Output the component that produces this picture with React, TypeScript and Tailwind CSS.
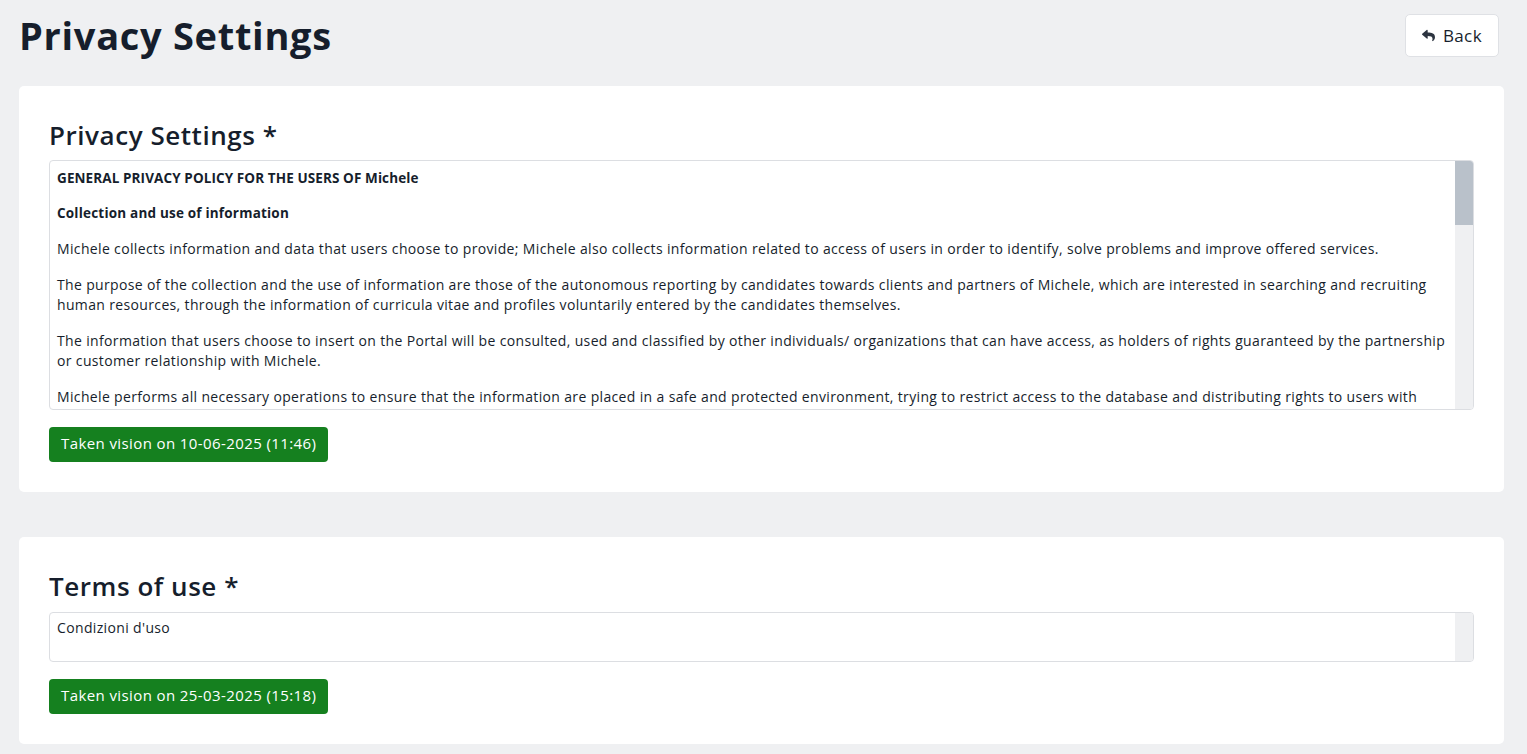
import { FaReply } from 'react-icons/fa'

const PARAGRAPHS = [
  'Michele collects information and data that users choose to provide; Michele also collects information related to access of users in order to identify, solve problems and improve offered services.',
  'The purpose of the collection and the use of information are those of the autonomous reporting by candidates towards clients and partners of Michele, which are interested in searching and recruiting human resources, through the information of curricula vitae and profiles voluntarily entered by the candidates themselves.',
  'The information that users choose to insert on the Portal will be consulted, used and classified by other individuals/ organizations that can have access, as holders of rights guaranteed by the partnership or customer relationship with Michele.',
  'Michele performs all necessary operations to ensure that the information are placed in a safe and protected environment, trying to restrict access to the database and distributing rights to users with different levels of authorization, in order to guarantee the confidentiality of the data entered.',
]

function TextBox({ height, thumb, children }: { height: string; thumb: boolean; children: React.ReactNode }) {
  return (
    <div className={`flex overflow-hidden rounded-[4px] border border-[#dcdee2] ${height}`}>
      <div className="flex-1 overflow-hidden pl-[7px] pr-[8px] text-[14px] leading-[20px] tracking-[0.35px]">
        {children}
      </div>
      <div className="w-[18px] shrink-0 bg-[#eff0f2]">
        {thumb && <div className="h-[64px] bg-[#b9c1ca]" />}
      </div>
    </div>
  )
}

function AcceptBadge({ label }: { label: string }) {
  return (
    <div className="mt-[17px] inline-flex h-[35px] items-center rounded-[4px] bg-[#15801f] px-[12px] pb-[3px] text-[15px] leading-[20px] tracking-[0.4px] text-white">
      {label}
    </div>
  )
}

export default function App() {
  return (
    <div className="min-h-screen bg-[#eff0f2] pb-[10px] pl-[19px] pr-[23px] text-[#161e2c] [font-family:'Open_Sans',sans-serif]">
      <div className="flex items-start justify-between pt-[13px]">
        <h1 className="text-[38px] font-bold leading-[44px] tracking-[0.7px]">Privacy Settings</h1>
        <button className="mr-[5px] mt-[1px] flex h-[43px] items-center gap-[8px] rounded-[5px] border border-[#dfe1e5] bg-white px-[16px] text-[17px] tracking-[0.4px]">
          <FaReply size={13} className="text-[#2c3440]" />
          Back
        </button>
      </div>

      <section className="mt-[29px] rounded-[5px] bg-white px-[30px] pb-[30px] pt-[32px]">
        <h2 className="mb-[8px] text-[26px] font-semibold leading-[34px] tracking-[0.55px]">Privacy Settings *</h2>
        <TextBox height="h-[250px]" thumb>
          <div className="pt-[7px]">
            <p className="text-[13.5px] font-bold tracking-[0.1px]">GENERAL PRIVACY POLICY FOR THE USERS OF Michele</p>
            <p className="mt-[15px] text-[13.5px] font-bold tracking-[0.2px]">Collection and use of information</p>
            {PARAGRAPHS.map(p => (
              <p key={p.slice(0, 24)} className="mt-[16px]">
                {p}
              </p>
            ))}
          </div>
        </TextBox>
        <AcceptBadge label="Taken vision on 10-06-2025 (11:46)" />
      </section>

      <section className="mt-[45px] rounded-[5px] bg-white px-[30px] pb-[30px] pt-[32px]">
        <h2 className="mb-[9px] text-[26px] font-semibold leading-[34px] tracking-[0.55px]">Terms of use *</h2>
        <TextBox height="h-[50px]" thumb={false}>
          <p className="pt-[5px]">Condizioni d'uso</p>
        </TextBox>
        <AcceptBadge label="Taken vision on 25-03-2025 (15:18)" />
      </section>
    </div>
  )
}
